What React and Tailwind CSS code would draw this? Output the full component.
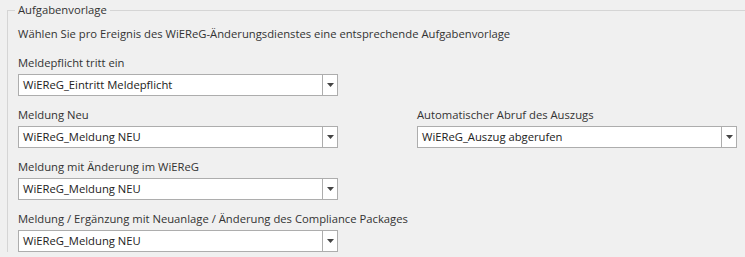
import React from 'react';

const font = { fontFamily: '"Open Sans", "Noto Sans", sans-serif' };

const Combo = ({ value }) => (
  <div className="flex h-[22px] w-[320px] border border-[#adadad] bg-white">
    <div className="flex flex-1 items-center truncate pl-[4px] text-[11.25px] text-[#222]">{value}</div>
    <div className="flex w-[15px] items-center justify-center border-l border-[#adadad]">
      <svg width="7" height="4" viewBox="0 0 7 4">
        <polygon points="0,0 7,0 3.5,4" fill="#444" />
      </svg>
    </div>
  </div>
);

const Field = ({ label, value }) => (
  <div className="flex flex-col">
    <label className="h-[16px] whitespace-nowrap text-[11.25px] leading-[16px] text-[#333]">{label}</label>
    <div className="mt-[3px]">
      <Combo value={value} />
    </div>
  </div>
);

export default function App() {
  return (
    <div className="h-[257px] w-[745px] overflow-hidden bg-[#f0f0f0]" style={font}>
      <fieldset className="ml-[7px] border-l border-t border-[#d5d5d5] pl-[10px] pt-[6px]">
        <legend className="ml-[-3px] px-[3px] text-[11.25px] leading-[20px] text-[#333]">Aufgabenvorlage</legend>
        <p className="whitespace-nowrap text-[11.25px] leading-[16px] text-[#333]">
          Wählen Sie pro Ereignis des WiEReG-Änderungsdienstes eine entsprechende Aufgabenvorlage
        </p>
        <div className="mt-[13px] grid grid-cols-[320px_320px] gap-x-[79px] gap-y-[11px]">
          <Field label="Meldepflicht tritt ein" value="WiEReG_Eintritt Meldepflicht" />
          <div />
          <Field label="Meldung Neu" value="WiEReG_Meldung NEU" />
          <Field label="Automatischer Abruf des Auszugs" value="WiEReG_Auszug abgerufen" />
          <Field label="Meldung mit Änderung im WiEReG" value="WiEReG_Meldung NEU" />
          <div />
          <Field
            label="Meldung / Ergänzung mit Neuanlage / Änderung des Compliance Packages"
            value="WiEReG_Meldung NEU"
          />
        </div>
      </fieldset>
    </div>
  );
}
